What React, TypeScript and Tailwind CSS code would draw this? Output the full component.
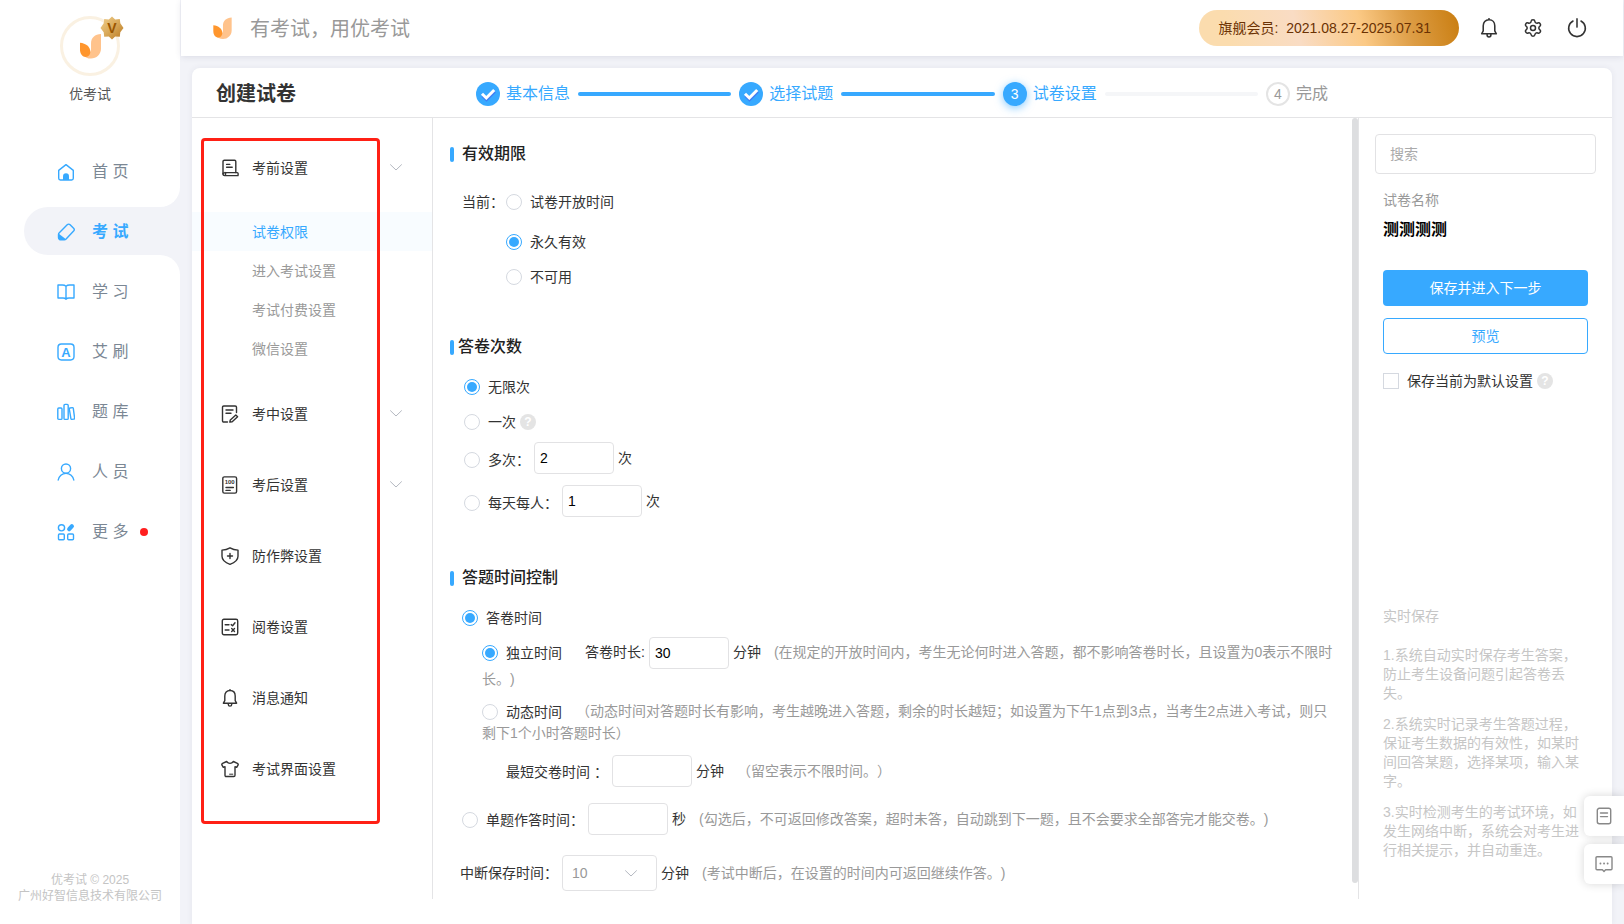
import React from "react";
import { Settings } from "lucide-react";

type IconProps = { className?: string };

function Svg({ className = "size-[18px]", children }: { className?: string; children: React.ReactNode }) {
  return (
    <svg
      viewBox="0 0 18 18"
      fill="none"
      stroke="currentColor"
      strokeWidth="1.4"
      strokeLinecap="round"
      strokeLinejoin="round"
      aria-hidden="true"
      className={`shrink-0 ${className}`}
    >
      {children}
    </svg>
  );
}

/* ---------- sidebar icons ---------- */

const HomeIcon = () => (
  <Svg>
    <path d="M1.700 7.400 9 1.600l7.300 5.800v7.900a1.700 1.700 0 0 1-1.700 1.700H3.400a1.700 1.700 0 0 1-1.700-1.700z" />
    <path d="M6 17v-3.800a3 3 0 0 1 6 0V17z" fill="currentColor" stroke="none" />
  </Svg>
);

const EraserIcon = () => (
  <Svg>
    <path d="M10.200 1.700a2 2 0 0 1 2.900 0l3.500 3.600a2 2 0 0 1 0 2.800l-7.500 8c-.5.600-1 .8-1.800.8H4c-1.500 0-2.500-1-2.500-2.300v-3c0-.8.3-1.300.8-1.800z" />
    <path d="M1.500 10.600 9 16.300c-.5.400-1 .6-1.700.6H4c-1.500 0-2.500-1-2.500-2.300z" fill="currentColor" stroke="none" />
  </Svg>
);

const BookIcon = () => (
  <Svg>
    <path d="M9 3.200C8 2.300 6.800 2 5.400 2H1v13h5c1.400 0 2.300.4 3 1.200.7-.8 1.600-1.200 3-1.200h5V2h-4.400C11.200 2 10 2.300 9 3.200zM9 3.200v13" />
  </Svg>
);

const LetterIcon = () => (
  <Svg>
    <rect x="1" y="1" width="16" height="16" rx="3.4" />
    <text x="9" y="13.6" textAnchor="middle" fontSize="13" fontWeight="700" fill="currentColor" stroke="none">
      A
    </text>
  </Svg>
);

const LibraryIcon = () => (
  <Svg>
    <rect x="0.8" y="5" width="4.2" height="11.4" rx="1" />
    <rect x="7" y="1.4" width="4.2" height="15" rx="1" />
    <path d="m13 5 2.300-.4a.9.9 0 0 1 1 .7l1.300 9.800a.9.9 0 0 1-.8 1l-1.900.3a.9.9 0 0 1-1-.8l-1.600-9.600a.9.9 0 0 1 .7-1z" />
  </Svg>
);

const PersonIcon = () => (
  <Svg>
    <circle cx="9" cy="5.6" r="4.6" />
    <path d="M1.200 17a7.900 7.900 0 0 1 15.600 0" />
  </Svg>
);

const MoreIcon = () => (
  <Svg>
    <circle cx="4.500" cy="4.8" r="3.1" />
    <rect x="1.500" y="11" width="5.8" height="5.8" rx="1" />
    <rect x="10.700" y="11" width="5.8" height="5.8" rx="1" />
    <path d="m12.200 6.200 2.700-3" strokeWidth="4.2" />
  </Svg>
);

/* ---------- settings menu icons ---------- */

const ScrollIcon = () => (
  <Svg>
    <path d="M2 15V2.600C2 1.700 2.600 1.200 3.400 1.200h10.200c.8 0 1.200.5 1.200 1.300v11" />
    <path d="M4 13.600h12c1.200 0 1.300 1 1 3H3.600C2.500 16.600 2 16 2 15.100s1-1.500 2-1.500zm0 0c.8.8.8 2 .2 3M5.600 5.400h3.200M5.600 8.200h5.600" />
  </Svg>
);

const EditDocIcon = () => (
  <Svg>
    <path d="M6.500 17H2.800C2 17 1.500 16.500 1.500 15.700V2.300C1.500 1.500 2 1 2.800 1h11.400c.8 0 1.300.5 1.300 1.300v5.200M5 5h7M5 8.200h5" />
    <path d="m9.300 14.900 5.500-5 1.800 1.900-5.400 4.900-2.400.4z" />
  </Svg>
);

const ScoreIcon = () => (
  <Svg>
    <rect x="1.800" y="0.9" width="13.800" height="16.200" rx="1.6" />
    <text x="8.700" y="8" textAnchor="middle" fontSize="6" fontWeight="700" fill="currentColor" stroke="none">
      100
    </text>
    <path d="M5 11.500h7.400M5 14.400h4.200" />
  </Svg>
);

const ShieldIcon = () => (
  <Svg>
    <path d="M9 .8c2.500 1.400 5 2.100 8 2.300v6.200c0 3.700-3.200 6.300-8 8-4.800-1.700-8-4.300-8-8V3.100C4 2.900 6.500 2.200 9 .8zM9 6.500v5M6.500 9h5" />
  </Svg>
);

const ReviewIcon = () => (
  <Svg>
    <rect x="1.300" y="1.300" width="15.400" height="15.400" rx="1.6" />
    <path d="M4.200 6.800H8M4.200 12H8M10.200 6.600l1.400 1.200 2.400-3M10.700 10.600l2.800 2.800M13.500 10.600l-2.800 2.800" />
  </Svg>
);

const BellIcon = ({ className }: IconProps) => (
  <Svg className={className}>
    <path d="M9 1.500c3.300 0 5.200 2.400 5.200 5.500v4.600l1.400 2.600H2.400l1.400-2.600V7c0-3.100 1.900-5.500 5.200-5.500zM9 .6v.9M7.300 14.800v.6c0 1 .8 1.700 1.700 1.700s1.700-.7 1.700-1.700v-.6" />
  </Svg>
);

const ShirtIcon = () => (
  <Svg>
    <path d="M5.600 1.500C6.500 2.800 7.600 3.400 9 3.400s2.500-.6 3.400-1.900l4 1.800c.9.500 1 1.100.6 1.900l-1.300 2.100-1.700-.6v8.600c0 .8-.4 1.200-1.200 1.200H5.200c-.8 0-1.200-.4-1.200-1.200V6.700l-1.700.6L1 5.200c-.4-.8-.3-1.400.6-1.900z" />
    <path d="M8.600 14.200h3.200" strokeWidth="1" />
  </Svg>
);

const PowerIcon = () => (
  <Svg className="size-5">
    <path d="M5.400 2.700a7.500 7.500 0 1 0 7.200 0M9 .8v7.400" />
  </Svg>
);

const NoteIcon = () => (
  <Svg>
    <rect x="2.300" y="1.300" width="13.400" height="15.400" rx="2" />
    <path d="M5.500 6h7M5.500 9.600h7" />
  </Svg>
);

const ChatIcon = () => (
  <Svg>
    <path d="M2 1.800h14a1 1 0 0 1 1 1v11a1 1 0 0 1-1 1h-5.400L9 16.500l-1.600-1.700H2a1 1 0 0 1-1-1v-11a1 1 0 0 1 1-1z" />
    <path d="M5.400 8.500h.1M9 8.500h.1M12.600 8.500h.1" strokeWidth="1.8" />
  </Svg>
);

const Chevron = ({ className = "" }: IconProps) => (
  <svg viewBox="0 0 12 7" fill="none" stroke="#b4b8c0" strokeLinecap="round" aria-hidden="true" className={`h-[7px] w-3 ${className}`}>
    <path d="m.5.7 5.500 5.300L11.500.7" />
  </svg>
);

const Logo = ({ className }: IconProps) => (
  <svg viewBox="0 0 20 24" aria-hidden="true" className={className}>
    <path d="M20 .5v14.200C20 20 15.700 24 10.500 24c-3.300 0-6.300-1.800-8.500-4.500 4 1.600 8.500-.4 8.500-5V9.500C10.500 4 14.200.8 20 .5z" fill="#ffc38c" />
    <path d="M0 9c5.500.6 9.800 3.800 9.800 8.500 0 3-1.900 4.900-4.300 4.900C2.200 22.400 0 19.200 0 15.500z" fill="#ff962d" />
  </svg>
);

const VipBadge = ({ className }: IconProps) => (
  <svg viewBox="0 0 24 24" aria-hidden="true" className={className}>
    <defs>
      <linearGradient id="vip" x1="0" y1="0" x2="1" y2="1">
        <stop offset="0" stopColor="#f0cf8c" />
        <stop offset="0.5" stopColor="#d9a95a" />
        <stop offset="1" stopColor="#b9781f" />
      </linearGradient>
    </defs>
    <path
      d="m12 .6 3.200 2.900 4.600-.6.500 4.300 3.200 4.800-3.200 4.300-.5 4.500-4.600-.4L12 23.600l-3.200-3.200-4.600.4-.5-4.500L.5 12l3.200-4.800.5-4.300 4.600.6z"
      fill="url(#vip)"
    />
    <text x="12" y="17" textAnchor="middle" fontSize="14" fontWeight="700" fill="#9a5600">
      V
    </text>
  </svg>
);

function Help() {
  return (
    <button
      type="button"
      aria-label="?"
      className="flex size-4 shrink-0 items-center justify-center rounded-full bg-[#e4e4e4] text-xs font-bold leading-4 text-white"
    >
      ?
    </button>
  );
}

/* ---------- page pieces ---------- */

const navItems = [
  { label: "首 页", icon: HomeIcon },
  { label: "考 试", icon: EraserIcon, active: true },
  { label: "学 习", icon: BookIcon },
  { label: "艾 刷", icon: LetterIcon },
  { label: "题 库", icon: LibraryIcon },
  { label: "人 员", icon: PersonIcon },
  { label: "更 多", icon: MoreIcon, dot: true },
];

function Sidebar() {
  return (
    <aside className="flex w-[180px] shrink-0 flex-col bg-white">
      <div className="flex flex-col items-center pt-4">
        <div className="relative flex size-[60px] items-center justify-center rounded-full border-[3px] border-[#faf1e2]">
          <Logo className="h-[26px] w-[21px]" />
          <VipBadge className="absolute -right-[7px] -top-[3px] size-6" />
        </div>
        <div className="mt-2 text-sm leading-5 text-[#555]">优考试</div>
      </div>

      <nav className="mt-[43px] flex flex-col gap-3">
        {navItems.map(({ label, icon: Icon, active, dot }) => (
          <a
            key={label}
            href="#"
            className={`relative ml-6 flex h-12 items-center rounded-l-full pl-[33px] pt-0.5 text-base ${
              active ? "bg-[#f2f3f8] font-bold" : ""
            }`}
          >
            {active && (
              <>
                <span className="absolute -top-5 right-0 size-5 bg-[#f2f3f8]">
                  <span className="block size-full rounded-br-[20px] bg-white" />
                </span>
                <span className="absolute -bottom-5 right-0 size-5 bg-[#f2f3f8]">
                  <span className="block size-full rounded-tr-[20px] bg-white" />
                </span>
              </>
            )}
            <span className="text-[#37a9ff]">
              <Icon />
            </span>
            <span className={`ml-[17px] ${active ? "text-[#37a9ff]" : "text-[#7b8794]"}`}>{label}</span>
            {dot && <span className="ml-3 size-2 rounded-full bg-[#ff1f1f]" />}
          </a>
        ))}
      </nav>

      <footer className="mt-auto pb-5 text-center text-xs leading-4 text-[#c4c4c4]">
        <p>优考试 © 2025</p>
        <p>广州好智信息技术有限公司</p>
      </footer>
    </aside>
  );
}

function Header() {
  return (
    <header className="z-10 ml-px mr-px flex h-14 items-center bg-white pl-8 pr-9 shadow-[0_1px_6px_rgba(60,60,100,0.12)]">
      <Logo className="h-[22px] w-[19px]" />
      <span className="ml-[18px] pt-0.5 text-xl text-[#999]">有考试，用优考试</span>
      <div className="ml-auto flex h-9 items-center rounded-full bg-[linear-gradient(75deg,#fbdcae_0%,#fbdcae_12%,#f9dcc4_38%,#fbc985_62%,#dd9d45_80%,#c97d10_100%)] pl-5 pr-7 text-sm text-[#6b3203]">
        旗舰会员:&nbsp; 2021.08.27-2025.07.31
      </div>
      <div className="ml-5 flex items-center gap-6 text-[#333]">
        <button type="button" aria-label="消息通知">
          <BellIcon className="size-5" />
        </button>
        <button type="button" aria-label="设置">
          <Settings size={20} strokeWidth={1.8} />
        </button>
        <button type="button" aria-label="退出">
          <PowerIcon />
        </button>
      </div>
    </header>
  );
}

const steps = [
  { label: "基本信息", state: "done" },
  { label: "选择试题", state: "done" },
  { label: "试卷设置", state: "current" },
  { label: "完成", state: "todo" },
];

function Steps() {
  return (
    <div className="flex h-[50px] items-center border-b border-[#e4e4e6] pt-0.5">
      <h1 className="w-[284px] shrink-0 pl-6 text-xl font-bold text-[#333]">创建试卷</h1>
      <ol className="flex flex-1 items-center pr-[284px]">
        {steps.map(({ label, state }, i) => (
          <li key={label} className={`flex items-center ${i < steps.length - 1 ? "flex-1" : ""}`}>
            {state === "done" && (
              <span className="flex size-6 items-center justify-center rounded-full bg-[#37a9ff]">
                <svg viewBox="0 0 24 24" fill="none" strokeWidth="3" aria-hidden="true" className="size-6">
                  <path d="m6.500 13.700 4 4 8.300-8.200" stroke="#3f7ff5" />
                  <path d="m6 11.800 4.300 4.200 7.900-8" stroke="#fff" />
                </svg>
              </span>
            )}
            {state === "current" && (
              <span className="flex size-6 items-center justify-center rounded-full bg-[#37a9ff] text-sm text-white shadow-[0_2px_8px_rgba(55,169,255,0.6)]">
                {i + 1}
              </span>
            )}
            {state === "todo" && (
              <span className="flex size-6 items-center justify-center rounded-full border-2 border-[#e4e4e4] text-sm text-[#999]">
                {i + 1}
              </span>
            )}
            <span className={`ml-1.5 text-base ${state === "todo" ? "text-[#999]" : "text-[#37a9ff]"}`}>{label}</span>
            {i < steps.length - 1 && (
              <span className={`mx-2 h-1 flex-1 rounded-full ${state === "done" ? "bg-[#37a9ff]" : "bg-[#f5f6f8]"}`} />
            )}
          </li>
        ))}
      </ol>
    </div>
  );
}

const menu = [
  { label: "考中设置", icon: EditDocIcon, more: true },
  { label: "考后设置", icon: ScoreIcon, more: true },
  { label: "防作弊设置", icon: ShieldIcon },
  { label: "阅卷设置", icon: ReviewIcon },
  { label: "消息通知", icon: BellIcon },
  { label: "考试界面设置", icon: ShirtIcon },
];

const subMenu = ["试卷权限", "进入考试设置", "考试付费设置", "微信设置"];

function MenuItem({ label, icon: Icon, more }: { label: string; icon: React.FC<IconProps>; more?: boolean }) {
  return (
    <a href="#" className="flex h-[71px] items-center pl-[29px] pr-[30px] text-[#333]">
      <Icon />
      <span className="ml-[13px]">{label}</span>
      {more && <Chevron className="ml-auto" />}
    </a>
  );
}

function SettingsMenu() {
  return (
    <nav className="relative w-[241px] shrink-0 border-r border-[#e4e4e6] pt-3.5">
      <MenuItem label="考前设置" icon={ScrollIcon} more />
      <ul className="mb-2.5 mt-[9px]">
        {subMenu.map((label, i) => (
          <li key={label}>
            <a
              href="#"
              className={`flex h-[39px] items-center pl-[60px] ${i === 0 ? "bg-[#f8fcff] text-[#37a9ff]" : "text-[#999]"}`}
            >
              {label}
            </a>
          </li>
        ))}
      </ul>
      {menu.map((item) => (
        <MenuItem key={item.label} {...item} />
      ))}
      <div className="pointer-events-none absolute left-[9px] right-[52px] top-5 h-[686px] rounded border-[3px] border-[#ff2015]" />
    </nav>
  );
}

function SectionTitle({ children, className = "" }: { children: React.ReactNode; className?: string }) {
  return (
    <h2 className={`flex h-6 items-center text-base font-medium text-[#222] ${className}`}>
      <span className="h-[15px] w-1 rounded-sm bg-[#37a9ff]" />
      {children}
    </h2>
  );
}

function Radio({ name, checked, children }: { name: string; checked?: boolean; children: React.ReactNode }) {
  return (
    <label className="inline-flex items-center gap-2 align-middle">
      <input
        type="radio"
        name={name}
        defaultChecked={checked}
        className="size-4 appearance-none rounded-full border border-[#d5d9e0] bg-white bg-clip-content p-0.5 checked:border-[#37a9ff] checked:bg-[#37a9ff]"
      />
      {children}
    </label>
  );
}

function NumberBox({ label, value, className = "" }: { label: string; value?: string; className?: string }) {
  return (
    <input
      type="text"
      aria-label={label}
      defaultValue={value}
      className={`h-8 w-20 rounded border border-[#e2e2e4] px-[5px] align-middle text-sm text-black ${className}`}
    />
  );
}

function Note({ children, className = "" }: { children: React.ReactNode; className?: string }) {
  return <span className={`text-[#999] ${className}`}>{children}</span>;
}

function SettingsForm() {
  return (
    <main className="flex min-w-0 flex-1">
      <form className="min-w-0 flex-1 pl-[17px] pr-4 pt-6">
        <section>
          <SectionTitle className="gap-2">有效期限</SectionTitle>
          <div className="mt-4 flex pl-3">
            <span className="leading-10">当前：</span>
            <div className="ml-0.5 flex flex-col items-start">
              <div className="flex h-10 items-center">
                <Radio name="validity">试卷开放时间</Radio>
              </div>
              <div className="flex h-10 items-center">
                <Radio name="validity" checked>
                  永久有效
                </Radio>
              </div>
              <div className="flex h-[30px] items-center">
                <Radio name="validity">不可用</Radio>
              </div>
            </div>
          </div>
        </section>

        <section className="mt-[43px]">
          <SectionTitle className="gap-1">答卷次数</SectionTitle>
          <div className="mt-2.5 pl-3.5">
            <div className="flex h-[35px] items-center">
              <Radio name="times" checked>
                无限次
              </Radio>
            </div>
            <div className="flex h-[35px] items-center gap-1">
              <Radio name="times">一次</Radio>
              <Help />
            </div>
            <div className="flex h-[38px] items-center gap-1">
              <div className="pt-0.5">
                <Radio name="times">多次：</Radio>
              </div>
              <NumberBox label="多次" value="2" />
              <span>次</span>
            </div>
            <div className="mt-1.5 flex h-9 items-center gap-1">
              <div className="pt-0.5">
                <Radio name="times">每天每人：</Radio>
              </div>
              <NumberBox label="每天每人" value="1" />
              <span>次</span>
            </div>
          </div>
        </section>

        <section className="mt-[47px]">
          <SectionTitle className="gap-2">答题时间控制</SectionTitle>
          <div className="mt-[9px] pl-3">
            <div className="flex h-[38px] items-center">
              <Radio name="mode" checked>
                答卷时间
              </Radio>
            </div>
            <div className="pl-5">
              <p className="leading-[21px]">
                <Radio name="timer" checked>
                  独立时间
                </Radio>
                <span className="ml-[23px] mr-1">答卷时长:</span>
                <NumberBox label="答卷时长" value="30" />
                <span className="ml-1">分钟</span>
                <Note className="ml-[13px]">
                  (在规定的开放时间内，考生无论何时进入答题，都不影响答卷时长，且设置为0表示不限时长。)
                </Note>
              </p>
              <p className="mt-[11px] leading-[21px]">
                <Radio name="timer">动态时间</Radio>
                <Note className="ml-3.5">
                  （动态时间对答题时长有影响，考生越晚进入答题，剩余的时长越短；如设置为下午1点到3点，当考生2点进入考试，则只剩下1个小时答题时长）
                </Note>
              </p>
              <div className="mt-[11px] flex items-center gap-1 pl-6">
                <label htmlFor="shortest" className="pt-0.5">
                  最短交卷时间 ：
                </label>
                <input id="shortest" type="text" className="h-8 w-20 rounded border border-[#e2e2e4] px-[5px] text-sm" />
                <span>分钟</span>
                <Note className="ml-[9px]">（留空表示不限时间。）</Note>
              </div>
            </div>
            <div className="mt-4 flex items-center gap-1">
              <div className="pt-0.5">
                <Radio name="mode">单题作答时间：</Radio>
              </div>
              <NumberBox label="单题作答时间" />
              <span>秒</span>
              <Note className="ml-[9px]">(勾选后，不可返回修改答案，超时未答，自动跳到下一题，且不会要求全部答完才能交卷。)</Note>
            </div>
          </div>
          <div className="mt-5 flex items-center gap-1 pl-2.5">
            <label htmlFor="interrupt">中断保存时间：</label>
            <span className="relative">
              <select
                id="interrupt"
                defaultValue="10"
                className="block h-9 w-[95px] appearance-none rounded border border-[#e2e2e4] bg-white pl-[9px] text-sm text-[#999]"
              >
                <option>10</option>
              </select>
              <Chevron className="pointer-events-none absolute right-5 top-[15px]" />
            </span>
            <span>分钟</span>
            <Note className="ml-[9px]">(考试中断后，在设置的时间内可返回继续作答。)</Note>
          </div>
        </section>
      </form>
      <div className="w-1.5 shrink-0">
        <div className="h-[98%] rounded-full bg-[#dddee0]" />
      </div>
    </main>
  );
}

function SavePanel() {
  return (
    <aside className="flex w-[254px] shrink-0 flex-col border-l border-[#e4e4e6] px-4 pt-4">
      <input
        type="search"
        aria-label="搜索"
        placeholder="搜索"
        className="h-10 w-full rounded border border-[#e2e2e4] px-3.5 text-sm placeholder:text-[#aaa]"
      />
      <div className="flex flex-1 flex-col px-2 pt-4">
        <p className="text-[#999]">试卷名称</p>
        <p className="mt-2 text-base font-bold text-black">测测测测</p>
        <button type="button" className="mt-7 h-9 rounded bg-[#37a9ff] text-white">
          保存并进入下一步
        </button>
        <button type="button" className="mt-3 h-9 rounded border border-[#37a9ff] text-[#37a9ff]">
          预览
        </button>
        <div className="mt-[17px] flex items-center gap-1">
          <label className="flex items-center gap-2">
            <input type="checkbox" className="size-4 appearance-none border border-[#d5d9e0] checked:bg-[#37a9ff]" />
            保存当前为默认设置
          </label>
          <Help />
        </div>

        <div className="mb-[39px] mt-auto leading-[19px] text-[#c6c6c6]">
          <p className="mb-5">实时保存</p>
          <p>1.系统自动实时保存考生答案，防止考生设备问题引起答卷丢失。</p>
          <p className="mt-3">2.系统实时记录考生答题过程，保证考生数据的有效性，如某时间回答某题，选择某项，输入某字。</p>
          <p className="mt-3">3.实时检测考生的考试环境，如发生网络中断，系统会对考生进行相关提示，并自动重连。</p>
        </div>
      </div>
    </aside>
  );
}

export default function App() {
  return (
    <div
      lang="zh-CN"
      className="flex min-h-screen bg-[#f2f3f8] font-['Liberation_Sans','Noto_Sans_CJK_SC',sans-serif] text-sm text-[#333] [text-spacing-trim:space-all]"
    >
      <Sidebar />
      <div className="flex min-w-0 flex-1 flex-col">
        <Header />
        <div className="ml-3 mr-3 mt-3 flex flex-1 flex-col rounded-t-lg bg-white pb-[25px] shadow-[0_0_6px_rgba(60,60,100,0.08)]">
          <Steps />
          <div className="flex flex-1">
            <SettingsMenu />
            <SettingsForm />
            <SavePanel />
          </div>
        </div>
      </div>

      <div className="fixed bottom-10 right-0 z-20 flex flex-col gap-2 text-[#888]">
        <button
          type="button"
          aria-label="文档"
          className="flex size-10 items-center justify-center rounded-l-md bg-white shadow-[0_0_10px_rgba(0,0,0,0.16)]"
        >
          <NoteIcon />
        </button>
        <button
          type="button"
          aria-label="反馈"
          className="flex size-10 items-center justify-center rounded-l-md bg-white shadow-[0_0_10px_rgba(0,0,0,0.16)]"
        >
          <ChatIcon />
        </button>
      </div>
    </div>
  );
}
